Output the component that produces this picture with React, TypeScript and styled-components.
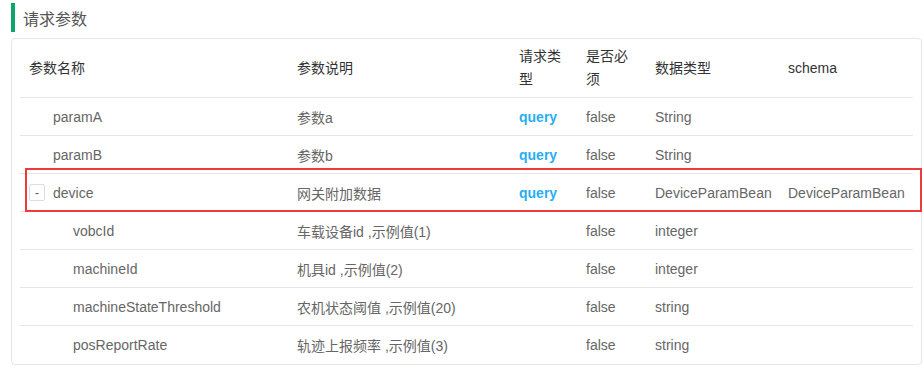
import styled, { createGlobalStyle } from "styled-components";

type Param = {
  name: string;
  desc: string;
  reqType?: string;
  required: string;
  dataType: string;
  schema?: string;
  level: number;
  expandable?: boolean;
  marked?: boolean;
};

const params: Param[] = [
  { name: "paramA", desc: "参数a", reqType: "query", required: "false", dataType: "String", level: 0 },
  { name: "paramB", desc: "参数b", reqType: "query", required: "false", dataType: "String", level: 0 },
  {
    name: "device",
    desc: "网关附加数据",
    reqType: "query",
    required: "false",
    dataType: "DeviceParamBean",
    schema: "DeviceParamBean",
    level: 0,
    expandable: true,
    marked: true,
  },
  { name: "vobcId", desc: "车载设备id ,示例值(1)", required: "false", dataType: "integer", level: 1 },
  { name: "machineId", desc: "机具id ,示例值(2)", required: "false", dataType: "integer", level: 1 },
  { name: "machineStateThreshold", desc: "农机状态阈值 ,示例值(20)", required: "false", dataType: "string", level: 1 },
  { name: "posReportRate", desc: "轨迹上报频率 ,示例值(3)", required: "false", dataType: "string", level: 1 },
];

const GlobalStyle = createGlobalStyle`
  body {
    margin: 0;
    background: #ffffff;
    font-family: "Liberation Sans", "Noto Sans CJK SC", sans-serif;
  }
`;

const App = () => {
  return (
    <Page>
      <GlobalStyle />
      <SectionTitle>请求参数</SectionTitle>
      <Card>
        <HeadRow>
          <HeadCell>参数名称</HeadCell>
          <HeadCell>参数说明</HeadCell>
          <HeadCell>请求类型</HeadCell>
          <HeadCell>是否必须</HeadCell>
          <HeadCell>数据类型</HeadCell>
          <HeadCell>schema</HeadCell>
        </HeadRow>
        {params.map((p, i) => (
          <Row key={p.name} $last={i === params.length - 1}>
            <NameCell $level={p.level}>
              {p.expandable && <ExpandBtn>-</ExpandBtn>}
              {p.name}
            </NameCell>
            <Cell>{p.desc}</Cell>
            <Cell>{p.reqType && <ReqType>{p.reqType}</ReqType>}</Cell>
            <Cell>{p.required}</Cell>
            <Cell>{p.dataType}</Cell>
            <Cell>{p.schema}</Cell>
            {p.marked && <Highlight />}
          </Row>
        ))}
      </Card>
    </Page>
  );
};

export default App;

const Page = styled.div`
  width: 923px;
  padding: 3px 0 0 11px;
  box-sizing: border-box;
`;

const SectionTitle = styled.h3`
  margin: 0;
  height: 29px;
  border-left: 4px solid #0da56c;
  padding-left: 8px;
  display: flex;
  align-items: center;
  font-size: 16px;
  font-weight: normal;
  color: #555555;
`;

const Card = styled.div`
  margin-top: 6px;
  width: 911px;
  box-sizing: border-box;
  border: 1px solid #e6e6e6;
  border-radius: 4px;
  padding: 0 8px;
`;

const columns = "268px 222px 67px 69px 133px 134px";

const HeadRow = styled.div`
  display: grid;
  grid-template-columns: ${columns};
  height: 58px;
  border-bottom: 1px solid #e6e6e6;
  align-items: center;
`;

const HeadCell = styled.div`
  padding: 0 9px;
  font-size: 14px;
  line-height: 23px;
  color: #333333;
`;

const Row = styled.div<{ $last?: boolean }>`
  position: relative;
  display: grid;
  grid-template-columns: ${columns};
  height: 38px;
  box-sizing: border-box;
  align-items: center;
  border-bottom: ${(p) => (p.$last ? "none" : "1px solid #e6e6e6")};
`;

const Cell = styled.div`
  padding: 0 9px;
  font-size: 14px;
  color: #666666;
  white-space: nowrap;
`;

const NameCell = styled(Cell)<{ $level: number }>`
  display: flex;
  align-items: center;
  padding-left: ${(p) => 33 + p.$level * 20}px;
  & > span {
    margin-left: -24px;
  }
`;

const ExpandBtn = styled.span`
  width: 16px;
  height: 17px;
  box-sizing: border-box;
  border: 1px solid #dddddd;
  border-radius: 2px;
  margin-right: 8px;
  display: flex;
  align-items: center;
  justify-content: center;
  font-size: 12px;
  color: #555555;
`;

const ReqType = styled.span`
  color: #2aaef3;
  font-weight: bold;
`;

const Highlight = styled.div`
  position: absolute;
  left: 5px;
  right: -9px;
  top: -6px;
  bottom: -1px;
  border: 2px solid #ef3a3a;
  pointer-events: none;
`;
